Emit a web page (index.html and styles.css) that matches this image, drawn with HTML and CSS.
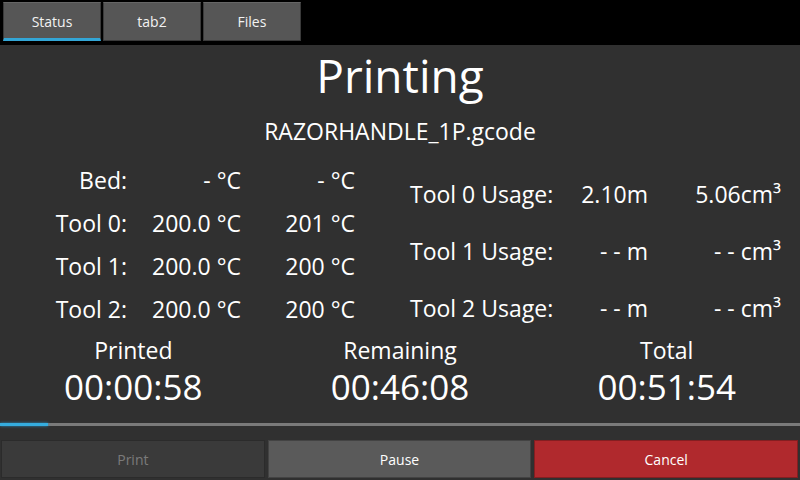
FILE: index.html
```html
<!DOCTYPE html>
<html>
<head>
<meta charset="utf-8">
<link rel="stylesheet" href="styles.css">
</head>
<body>
<div class="screen">
  <div class="tabbar">
    <div class="tab active">Status</div>
    <div class="tab">tab2</div>
    <div class="tab">Files</div>
  </div>
  <div class="main">
    <div class="title">Printing</div>
    <div class="filename">RAZORHANDLE_1P.gcode</div>
    <div class="tables">
      <div class="temps">
        <div class="lbl">Bed:</div><div class="val">- °C</div><div class="val">- °C</div>
        <div class="lbl">Tool 0:</div><div class="val">200.0 °C</div><div class="val">201 °C</div>
        <div class="lbl">Tool 1:</div><div class="val">200.0 °C</div><div class="val">200 °C</div>
        <div class="lbl">Tool 2:</div><div class="val">200.0 °C</div><div class="val">200 °C</div>
      </div>
      <div class="usage">
        <div class="ulbl">Tool 0 Usage:</div><div class="uval">2.10m</div><div class="uval">5.06cm³</div>
        <div class="ulbl">Tool 1 Usage:</div><div class="uval">- - m</div><div class="uval">- - cm³</div>
        <div class="ulbl">Tool 2 Usage:</div><div class="uval">- - m</div><div class="uval">- - cm³</div>
      </div>
    </div>
    <div class="times">
      <div class="time"><div class="tlabel">Printed</div><div class="tvalue">00:00:58</div></div>
      <div class="time"><div class="tlabel">Remaining</div><div class="tvalue">00:46:08</div></div>
      <div class="time"><div class="tlabel">Total</div><div class="tvalue">00:51:54</div></div>
    </div>
    <div class="progress"><div class="fill" style="width: 48px"></div></div>
    <div class="buttons">
      <div class="btn disabled">Print</div>
      <div class="btn pause">Pause</div>
      <div class="btn cancel">Cancel</div>
    </div>
  </div>
</div>
</body>
</html>
```
FILE: styles.css
```css
* { box-sizing: border-box; }
html, body { margin: 0; padding: 0; background: #000; }
body { font-family: "Open Sans", "DejaVu Sans", sans-serif; color: #fff; }
.screen { width: 800px; height: 480px; display: flex; flex-direction: column; overflow: hidden; }
.tabbar { height: 45px; flex-shrink: 0; background: #000; display: flex; gap: 2px; padding: 2px 3px 0 3px; }
.tab {
  width: 98px; height: 39px; background: #565656;
  border: 1px solid #3a3a3a; border-top-color: #666;
  display: flex; align-items: center; justify-content: center;
  font-size: 14px; color: #f2f2f2;
}
.tab.active { border-bottom: 3px solid #33a6d6; padding-top: 2px; }
.main { flex: 1; background: #303030; display: flex; flex-direction: column; }
.title { font-size: 46px; line-height: 56px; text-align: center; padding-top: 2px; flex-shrink: 0; }
.filename { font-size: 23px; line-height: 56px; text-align: center; flex-shrink: 0; }
.tables { display: flex; height: 178px; font-size: 23px; flex-shrink: 0; }
.temps { display: grid; grid-template-columns: 127px 114px 114px; grid-auto-rows: 43px; line-height: 43px; width: 400px; }
.temps > div { text-align: right; white-space: nowrap; }
.usage { display: grid; grid-template-columns: 143px 95px 133px; grid-auto-rows: 57px; line-height: 57px; margin-top: 7px; padding-left: 10px; width: 400px; }
.ulbl { text-align: left; white-space: nowrap; }
.uval { text-align: right; white-space: nowrap; }
.times { display: flex; flex-shrink: 0; }
.time { flex: 1; text-align: center; }
.tlabel { font-size: 23px; line-height: 26px; }
.tvalue { font-size: 35px; line-height: 47px; }
.progress { margin-top: 13px; height: 3px; background: #7a7a7a; flex-shrink: 0; }
.fill { height: 3px; background: #35addf; box-shadow: 0 0 3px #2a8fc0; }
.buttons { display: flex; gap: 3px; padding: 14px 2px 2px 1px; height: 54px; flex-shrink: 0; }
.btn {
  flex: 1; display: flex; align-items: center; justify-content: center;
  font-size: 14px; border: 1px solid rgba(0,0,0,0.25);
}
.btn.disabled { background: #3a3a3a; color: #7a7a7a; }
.btn.pause { background: #5a5a5a; color: #fff; }
.btn.cancel { background: #b0292d; color: #fff; }
```
